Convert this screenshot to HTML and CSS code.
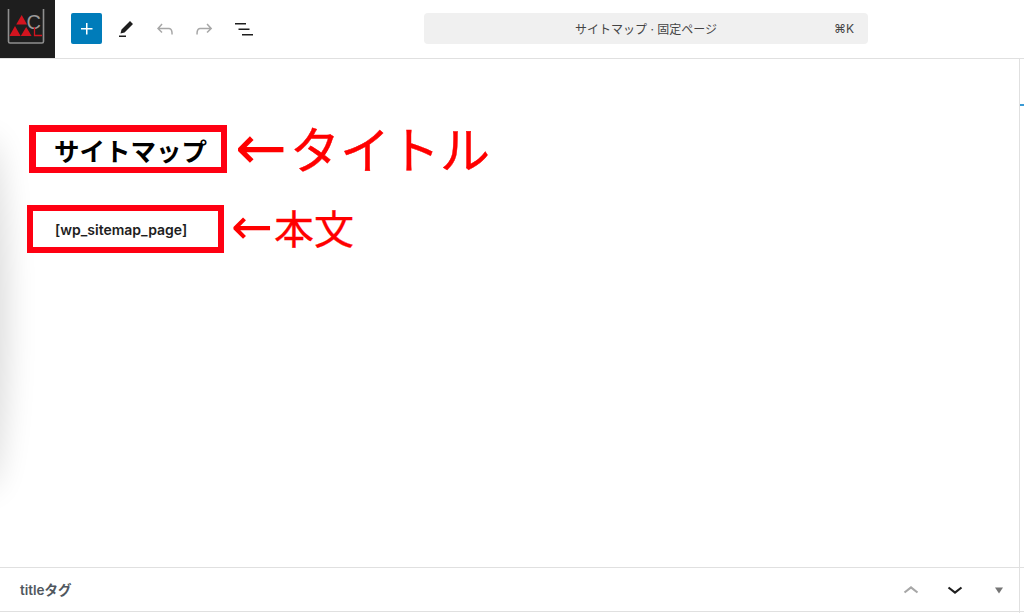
FILE: index.html
```html
<!DOCTYPE html>
<html lang="ja">
<head>
    <meta charset="UTF-8">
    <meta name="viewport" content="width=device-width, initial-scale=1.0">
    <title>サイトマップ · 固定ページ</title>
    <link rel="stylesheet" href="styles.css">
</head>
<body>
    <div class="app">
        <header class="topbar">
            <a class="logo" href="#" aria-label="サイト">
                <svg width="55" height="58" viewBox="0 0 55 58">
                    <path d="M8.5 9V41.5a1.5 1.5 0 0 0 1.5 1.5H42a1.5 1.5 0 0 0 1.5-1.5V9" fill="none" stroke="#8f8f8f" stroke-width="1.6"/>
                    <text class="logo-letter" x="26.5" y="28.5">C</text>
                    <path d="M21.7 15 27 24.6H16.2ZM15 26l5.6 10H9.4ZM26.2 27l5.4 9H20.8Z" fill="#d3141f"/>
                    <path d="M34.5 27V35.5H42" fill="none" stroke="#d3141f" stroke-width="1.3"/>
                </svg>
            </a>
            <button class="add-btn" aria-label="追加">
                <svg width="24" height="24" viewBox="0 0 24 24"><path d="M11 12.5V17.5H12.5V12.5H17.5V11H12.5V6H11V11H6V12.5H11Z" fill="#fff"/></svg>
            </button>
            <div class="tools">
                <button class="tool" aria-label="編集">
                    <svg width="24" height="24" viewBox="0 0 24 24"><path d="m19 7-3-3-8.5 8.5-1 4 4-1L19 7Zm-7 11.5H5V20h7v-1.5Z"/></svg>
                </button>
                <button class="tool muted" aria-label="元に戻す">
                    <svg width="24" height="24" viewBox="0 0 24 24"><path d="M18.3 11.7c-.6-.6-1.4-.9-2.3-.9H6.7l2.9-3.3-1.1-1-4.5 5L8.5 16l1-1-2.7-2.7H16c.5 0 .9.2 1.3.5 1 1 1 3.4 1 4.5v.3h1.5v-.2c0-1.5 0-4.3-1.5-5.7z"/></svg>
                </button>
                <button class="tool muted" aria-label="やり直す">
                    <svg width="24" height="24" viewBox="0 0 24 24"><path d="M15.6 6.5l-1.1 1 2.9 3.3H8c-.9 0-1.7.3-2.3.9-1.4 1.5-1.4 4.2-1.4 5.6v.2h1.5v-.3c0-1.1 0-3.5 1-4.5.3-.3.7-.5 1.3-.5h9.2L14.5 15l1.1 1.1 4.6-4.6-4.6-5z"/></svg>
                </button>
                <button class="tool" aria-label="リスト表示">
                    <svg width="24" height="24" viewBox="0 0 24 24"><path d="M3 6h11v1.5H3V6Zm3.5 5.5h11V13h-11v-1.5ZM21 17H10v1.5h11V17Z"/></svg>
                </button>
            </div>
            <div class="command-bar">
                <span></span>
                <span class="command-title">サイトマップ · 固定ページ</span>
                <span class="command-key">⌘K</span>
            </div>
        </header>

        <div class="workspace">
            <main class="canvas">
                <div class="note-row title-row">
                    <div class="red-box title-box"><h1>サイトマップ</h1></div>
                    <span class="note note-large"><span class="arrow">←</span>タイトル</span>
                </div>
                <div class="note-row body-row">
                    <div class="red-box body-box"><p>[wp_sitemap_page]</p></div>
                    <span class="note note-small"><span class="arrow">←</span>本文</span>
                </div>
            </main>
            <footer class="meta-bar">
                <span class="meta-title">titleタグ</span>
                <div class="meta-actions">
                    <button class="meta-btn muted" aria-label="上へ">
                        <svg width="24" height="24" viewBox="0 0 24 24"><path d="M5.5 14.5 12 9.5l6.5 5"/></svg>
                    </button>
                    <button class="meta-btn" aria-label="下へ">
                        <svg width="24" height="24" viewBox="0 0 24 24"><path d="M5.5 9.5 12 14.5l6.5-5"/></svg>
                    </button>
                    <button class="meta-btn toggle" aria-label="閉じる">
                        <svg width="24" height="24" viewBox="0 0 24 24"><path d="M8 9.5h8l-4 6z"/></svg>
                    </button>
                </div>
            </footer>
            <div class="edge-shadow"></div>
            <div class="scroll-rail"><span class="scroll-tick"></span></div>
        </div>
    </div>
</body>
</html>
```

FILE: styles.css
```css
* {
    box-sizing: border-box;
}
html, body {
    margin: 0;
    height: 100%;
    overflow: hidden;
    background: #fff;
}
body {
    font-family: Inter, "Noto Sans CJK JP", sans-serif;
    color: #1e1e1e;
}
button {
    border: 0;
    background: none;
    padding: 0;
    display: flex;
    align-items: center;
    justify-content: center;
}
.app {
    height: 613px;
    display: flex;
    flex-direction: column;
}
.topbar {
    height: 59px;
    flex: none;
    display: flex;
    align-items: center;
    border-bottom: 1px solid #e0e0e0;
}
.logo {
    width: 55px;
    height: 58px;
    display: block;
    background: #1e1e1e;
}
.logo svg {
    display: block;
}
.logo-letter {
    font-family: "Liberation Sans", sans-serif;
    font-size: 20px;
    fill: #9a9a9a;
}
.add-btn {
    width: 31px;
    height: 31px;
    margin: 0 0 1px 16px;
    background: #007cba;
    border-radius: 2px;
}
.tools {
    width: 160px;
    display: flex;
    margin: 0 0 1px 4px;
}
.tool {
    width: 39.4px;
    height: 31px;
}
.tool svg {
    fill: #1e1e1e;
}
.tool.muted svg {
    fill: #a7a7a7;
}
.command-bar {
    width: 444px;
    height: 31px;
    margin: 0 0 1px 158px;
    padding: 0 14px;
    display: grid;
    grid-template-columns: 1fr auto 1fr;
    align-items: center;
    background: #f0f0f0;
    border-radius: 4px;
    font-size: 12px;
    color: #444;
}
.command-key {
    justify-self: end;
}
.workspace {
    flex: 1;
    position: relative;
    display: flex;
    flex-direction: column;
}
.canvas {
    flex: 1;
    padding-top: 66px;
}
.note-row {
    display: flex;
    align-items: center;
}
.title-row {
    margin-left: 29px;
}
.body-row {
    margin-left: 27px;
    margin-top: 32px;
}
.red-box {
    display: flex;
    align-items: center;
    background: #fff;
}
.title-box {
    width: 198px;
    height: 48px;
    border: solid #ff0012;
    border-width: 7px 6px 6px 7px;
    padding-left: 18px;
}
.title-box h1 {
    margin: 0;
    font-size: 25.5px;
    font-weight: 700;
    color: #000;
}
.body-box {
    width: 197px;
    height: 48px;
    border: 6px solid #ff0012;
    padding-left: 22px;
}
.body-box p {
    margin: 0;
    font-size: 14px;
    font-weight: 600;
}
.note {
    color: #ff0000;
    line-height: 1;
    white-space: nowrap;
}
.note-large {
    font-size: 50px;
    margin: -8px 0 -12px 8px;
    -webkit-text-stroke: 0.4px #ff0000;
}
.note-small {
    font-size: 40px;
    margin: -9px 0 -11px 7px;
    -webkit-text-stroke: 0.3px #ff0000;
}
.arrow {
    font-family: "DejaVu Sans", sans-serif;
    line-height: 0;
    -webkit-text-stroke: 0;
}
.note-large .arrow {
    font-size: 62px;
    margin-right: 3px;
}
.note-small .arrow {
    font-size: 50px;
    margin-right: 1px;
}
.meta-bar {
    height: 45px;
    margin-bottom: 1px;
    padding: 0 13px 0 20px;
    flex: none;
    display: flex;
    align-items: center;
    justify-content: space-between;
    border-top: 1px solid #e0e0e0;
    border-bottom: 1px solid #e0e0e0;
}
.meta-title {
    font-size: 13.5px;
    font-weight: 600;
    color: #50575e;
    margin-bottom: 2px;
}
.meta-actions {
    display: flex;
    gap: 20px;
}
.meta-btn {
    width: 24px;
    height: 24px;
}
.meta-btn svg {
    fill: none;
    stroke: #1e1e1e;
    stroke-width: 2.2;
}
.meta-btn.muted svg {
    stroke: #a7a7a7;
}
.meta-btn.toggle svg {
    fill: #757575;
    stroke: none;
}
/* shadow of the closed sidebar, comes in from the left edge */
.edge-shadow {
    position: absolute;
    left: -26px;
    top: 85px;
    width: 26px;
    height: 340px;
    border-radius: 50%;
    box-shadow: 0 0 30px 8px rgba(0, 0, 0, 0.14);
}
.scroll-rail {
    position: absolute;
    top: 0;
    right: 0;
    bottom: 0;
    width: 5px;
    border-left: 1px solid #e0e0e0;
}
.scroll-tick {
    position: absolute;
    top: 45px;
    left: 0;
    width: 4px;
    height: 2px;
    background: #3a9bd5;
}
```
